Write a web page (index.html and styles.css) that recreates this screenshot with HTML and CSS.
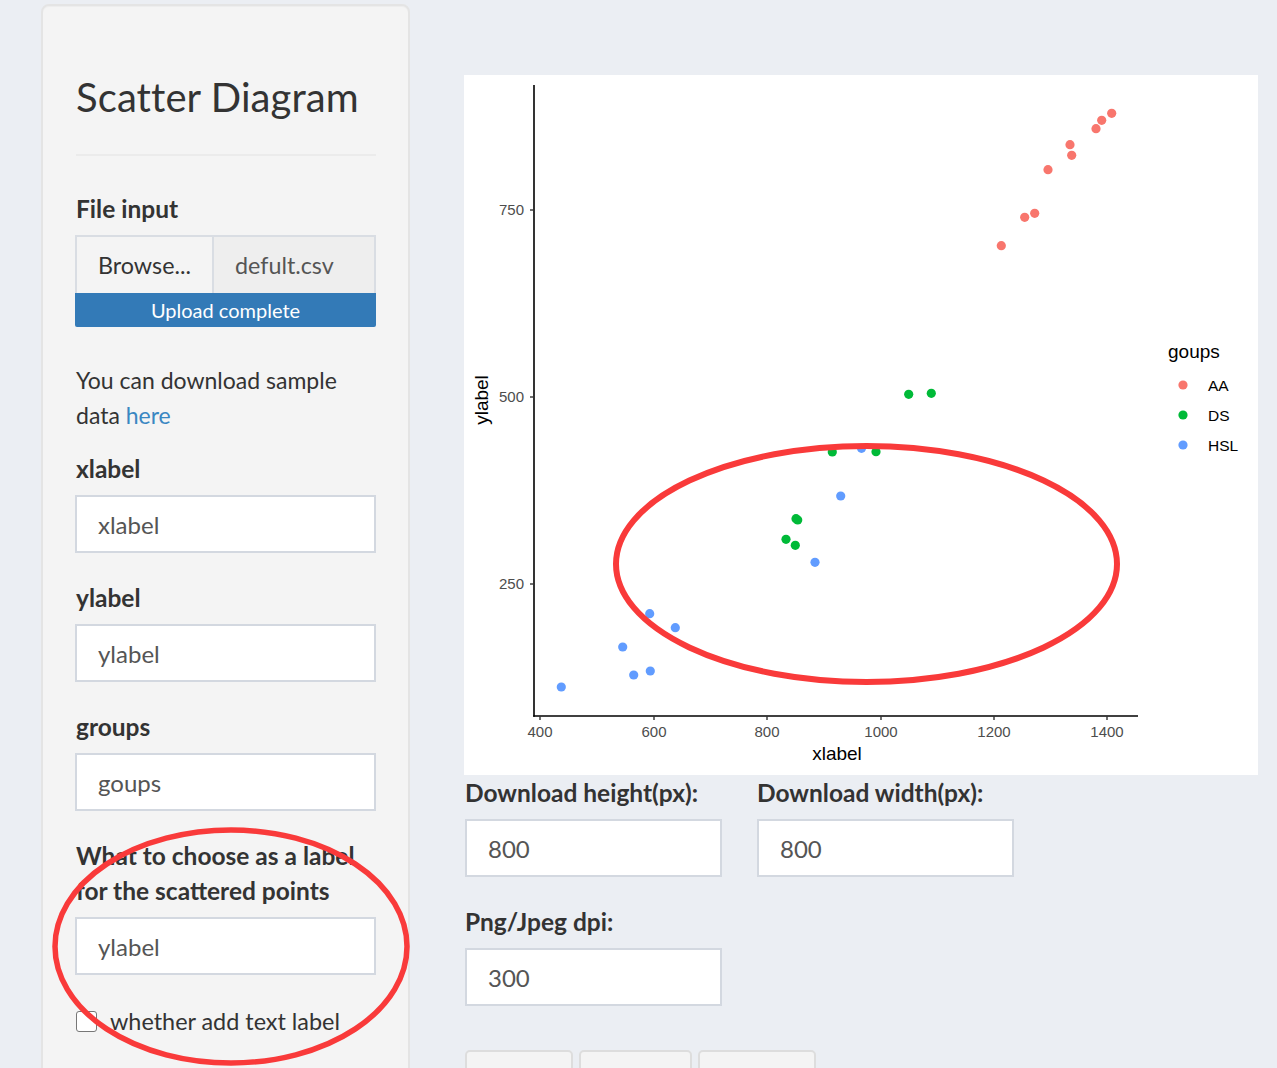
FILE: index.html
```html
<!DOCTYPE html>
<html>
<head>
<meta charset="utf-8">
<title>Scatter Diagram</title>
<link rel="stylesheet" href="styles.css">
</head>
<body>
<div class="page">
  <aside class="sidebar">
    <h2 class="title">Scatter Diagram</h2>
    <hr class="rule">
    <div class="group">
      <label class="lbl">File input</label>
      <div class="file">
        <span class="browse">Browse...</span>
        <span class="fname">defult.csv</span>
      </div>
      <div class="progress">Upload complete</div>
    </div>
    <p class="note">You can download sample data <a href="#" class="link">here</a></p>
    <div class="group">
      <label class="lbl">xlabel</label>
      <div class="input">xlabel</div>
    </div>
    <div class="group">
      <label class="lbl">ylabel</label>
      <div class="input">ylabel</div>
    </div>
    <div class="group">
      <label class="lbl">groups</label>
      <div class="input">goups</div>
    </div>
    <div class="group">
      <label class="lbl">What to choose as a label for the scattered points</label>
      <div class="input">ylabel</div>
    </div>
    <div class="check">
      <span class="box"></span>
      <span>whether add text label</span>
    </div>
  </aside>

  <main class="main">
    <div class="plot">
      <svg width="794" height="700" viewBox="0 0 794 700" xmlns="http://www.w3.org/2000/svg">
        <rect width="794" height="700" fill="#ffffff"/>
        <g stroke="#000" stroke-width="1.6" fill="none">
          <line x1="70" y1="10" x2="70" y2="641.8"/>
          <line x1="69.2" y1="641" x2="674" y2="641"/>
        </g>
        <g stroke="#333" stroke-width="1.4">
          <line x1="66" y1="135" x2="70" y2="135"/>
          <line x1="66" y1="322" x2="70" y2="322"/>
          <line x1="66" y1="509" x2="70" y2="509"/>
          <line x1="76" y1="641" x2="76" y2="645"/>
          <line x1="190" y1="641" x2="190" y2="645"/>
          <line x1="303" y1="641" x2="303" y2="645"/>
          <line x1="417" y1="641" x2="417" y2="645"/>
          <line x1="530" y1="641" x2="530" y2="645"/>
          <line x1="643" y1="641" x2="643" y2="645"/>
        </g>
        <g class="tick" text-anchor="end">
          <text x="60" y="140">750</text>
          <text x="60" y="327">500</text>
          <text x="60" y="514">250</text>
        </g>
        <g class="tick" text-anchor="middle">
          <text x="76" y="662">400</text>
          <text x="190" y="662">600</text>
          <text x="303" y="662">800</text>
          <text x="417" y="662">1000</text>
          <text x="530" y="662">1200</text>
          <text x="643" y="662">1400</text>
        </g>
        <text class="axis" x="373" y="685" text-anchor="middle">xlabel</text>
        <text class="axis" x="24" y="325" text-anchor="middle" transform="rotate(-90 24 325)">ylabel</text>
        <g fill="#F8766D">
          <circle cx="647.7" cy="38.3" r="4.6"/>
          <circle cx="637.7" cy="45.3" r="4.6"/>
          <circle cx="632" cy="53.7" r="4.6"/>
          <circle cx="606" cy="69.7" r="4.6"/>
          <circle cx="607.7" cy="80.3" r="4.6"/>
          <circle cx="584" cy="94.7" r="4.6"/>
          <circle cx="570.7" cy="138.3" r="4.6"/>
          <circle cx="560.7" cy="142.3" r="4.6"/>
          <circle cx="537.3" cy="170.7" r="4.6"/>
        </g>
        <g fill="#00BA38">
          <circle cx="444.7" cy="319.3" r="4.6"/>
          <circle cx="467.3" cy="318.3" r="4.6"/>
          <circle cx="412" cy="376.7" r="4.6"/>
          <circle cx="368.3" cy="377" r="4.6"/>
          <circle cx="332" cy="443.7" r="4.6"/>
          <circle cx="333.7" cy="445" r="4.6"/>
          <circle cx="322" cy="464.3" r="4.6"/>
          <circle cx="331.3" cy="470.3" r="4.6"/>
        </g>
        <g fill="#619CFF">
          <circle cx="397.5" cy="373.3" r="4.6"/>
          <circle cx="376.7" cy="421" r="4.6"/>
          <circle cx="351" cy="487.3" r="4.6"/>
          <circle cx="185.7" cy="538.7" r="4.6"/>
          <circle cx="211.3" cy="552.7" r="4.6"/>
          <circle cx="158.7" cy="572" r="4.6"/>
          <circle cx="186.3" cy="596" r="4.6"/>
          <circle cx="169.7" cy="600" r="4.6"/>
          <circle cx="97.3" cy="612" r="4.6"/>
        </g>
        <text class="legend-title" x="704" y="283">goups</text>
        <circle cx="719" cy="310" r="4.6" fill="#F8766D"/>
        <circle cx="719" cy="340" r="4.6" fill="#00BA38"/>
        <circle cx="719" cy="370" r="4.6" fill="#619CFF"/>
        <text class="legend" x="744" y="315.5">AA</text>
        <text class="legend" x="744" y="345.5">DS</text>
        <text class="legend" x="744" y="375.5">HSL</text>
      </svg>
    </div>
    <div class="dl-grid">
      <div class="mgroup">
        <label class="lbl">Download height(px):</label>
        <div class="input">800</div>
      </div>
      <div class="mgroup">
        <label class="lbl">Download width(px):</label>
        <div class="input">800</div>
      </div>
      <div class="mgroup">
        <label class="lbl">Png/Jpeg dpi:</label>
        <div class="input">300</div>
      </div>
    </div>
    <div class="buttons">
      <button class="btn btn-a"><svg class="ico" viewBox="0 0 16 16"><path d="M7 1h2v7h3l-4 4-4-4h3zM2 13h12v2H2z" fill="#333"/></svg>png</button>
      <button class="btn btn-b"><svg class="ico" viewBox="0 0 16 16"><path d="M7 1h2v7h3l-4 4-4-4h3zM2 13h12v2H2z" fill="#333"/></svg>jpeg</button>
      <button class="btn btn-c"><svg class="ico" viewBox="0 0 16 16"><path d="M7 1h2v7h3l-4 4-4-4h3zM2 13h12v2H2z" fill="#333"/></svg>pdf</button>
    </div>
  </main>
</div>

<svg class="marks" width="1277" height="1068" viewBox="0 0 1277 1068" xmlns="http://www.w3.org/2000/svg">
  <ellipse cx="866.5" cy="564" rx="250.5" ry="118" fill="none" stroke="#f93a3a" stroke-width="6"/>
  <ellipse cx="231" cy="946.5" rx="176" ry="116.5" fill="none" stroke="#f93a3a" stroke-width="5.5"/>
</svg>
</body>
</html>
```

FILE: styles.css
```css
html, body {
  margin: 0;
  padding: 0;
}
body {
  background: #ebeef3;
  font-family: "Lato", "Open Sans", sans-serif;
  color: #333;
  width: 1277px;
  height: 1068px;
  overflow: hidden;
  position: relative;
}
.page {
  display: flex;
  align-items: flex-start;
  padding: 4px 0 0 41px;
}
.sidebar {
  box-sizing: border-box;
  width: 369px;
  min-height: 1100px;
  background: #f4f4f4;
  border: 2px solid #e4e4e4;
  border-radius: 8px;
  padding: 67px 32px 0 32px;
  box-shadow: inset 0 1px 1px rgba(0,0,0,0.03);
}
.title {
  margin: 0 0 0 1px;
  font-weight: 400;
  font-size: 40px;
  line-height: 48px;
  color: #333;
  letter-spacing: 0.1px;
}
.rule {
  border: 0;
  border-top: 2px solid #ebebeb;
  margin: 33px 0 0 1px;
  height: 0;
}
.group {
  display: flex;
  flex-direction: column;
  margin-top: 27px;
}
.rule + .group {
  margin-top: 35px;
}
.lbl {
  font-weight: 700;
  font-size: 24.5px;
  line-height: 35px;
  color: #333;
  margin-bottom: 9px;
  padding-left: 1px;
}
.file {
  display: flex;
  height: 58px;
  box-sizing: border-box;
  border: 2px solid #d9dde3;
  border-bottom: 0;
}
.browse {
  width: 137px;
  box-sizing: border-box;
  border-right: 2px solid #d9dde3;
  background: #f4f4f4;
  display: flex;
  align-items: center;
  justify-content: center;
  font-size: 23.3px;
  color: #333;
}
.fname {
  flex: 1;
  background: #eeeeee;
  display: flex;
  align-items: center;
  padding-left: 21px;
  font-size: 23.3px;
  color: #555;
}
.progress {
  height: 34px;
  background: #337ab7;
  color: #fff;
  font-size: 20px;
  line-height: 34px;
  text-align: center;
  border-radius: 0 0 2px 2px;
}
.note {
  margin: 36px 0 0 1px;
  font-size: 23px;
  line-height: 35px;
  color: #333;
}
.link {
  color: #3a87c2;
  text-decoration: none;
}
.note + .group {
  margin-top: 18px;
}
.input {
  box-sizing: border-box;
  height: 58px;
  border: 2px solid #d3d8e0;
  background: #fff;
  padding-left: 21px;
  display: flex;
  align-items: center;
  font-size: 24px;
  color: #555;
}
.check {
  display: flex;
  align-items: center;
  gap: 13px;
  margin-top: 34px;
  font-size: 23.4px;
  line-height: 24px;
  color: #333;
  padding-left: 1px;
}
.box {
  width: 19px;
  height: 19px;
  border: 1.5px solid #777;
  border-radius: 3px;
  background: #fff;
  flex: none;
}
.main {
  margin-left: 54px;
  padding-top: 71px;
  width: 794px;
}
.plot {
  width: 794px;
  height: 700px;
  background: #fff;
}
.plot svg {
  display: block;
}
.tick {
  font-family: "Liberation Sans", Arial, sans-serif;
  font-size: 15px;
  fill: #4d4d4d;
}
.axis {
  font-family: "Liberation Sans", Arial, sans-serif;
  font-size: 19px;
  fill: #000;
}
.legend-title {
  font-family: "Liberation Sans", Arial, sans-serif;
  font-size: 19px;
  fill: #000;
}
.legend {
  font-family: "Liberation Sans", Arial, sans-serif;
  font-size: 15.5px;
  fill: #000;
}
.dl-grid {
  display: grid;
  grid-template-columns: 257px 257px;
  column-gap: 35px;
  row-gap: 27px;
  padding-left: 1px;
}
.mgroup {
  display: flex;
  flex-direction: column;
}
.mgroup .lbl {
  padding-left: 0;
}
.buttons {
  display: flex;
  gap: 6px;
  margin-top: 44px;
  padding-left: 1px;
}
.btn {
  box-sizing: border-box;
  height: 48px;
  background: #f4f4f4;
  border: 2px solid #dddddd;
  border-radius: 5px;
  font-family: "Lato", sans-serif;
  font-size: 21px;
  color: #333;
  padding: 12px 0 0 28px;
  display: flex;
  align-items: flex-start;
  gap: 6px;
}
.btn-a { width: 108px; }
.btn-b { width: 113px; }
.btn-c { width: 118px; }
.ico {
  width: 16px;
  height: 16px;
  margin-top: 4px;
}
.marks {
  position: absolute;
  left: 0;
  top: 0;
  pointer-events: none;
}
```
